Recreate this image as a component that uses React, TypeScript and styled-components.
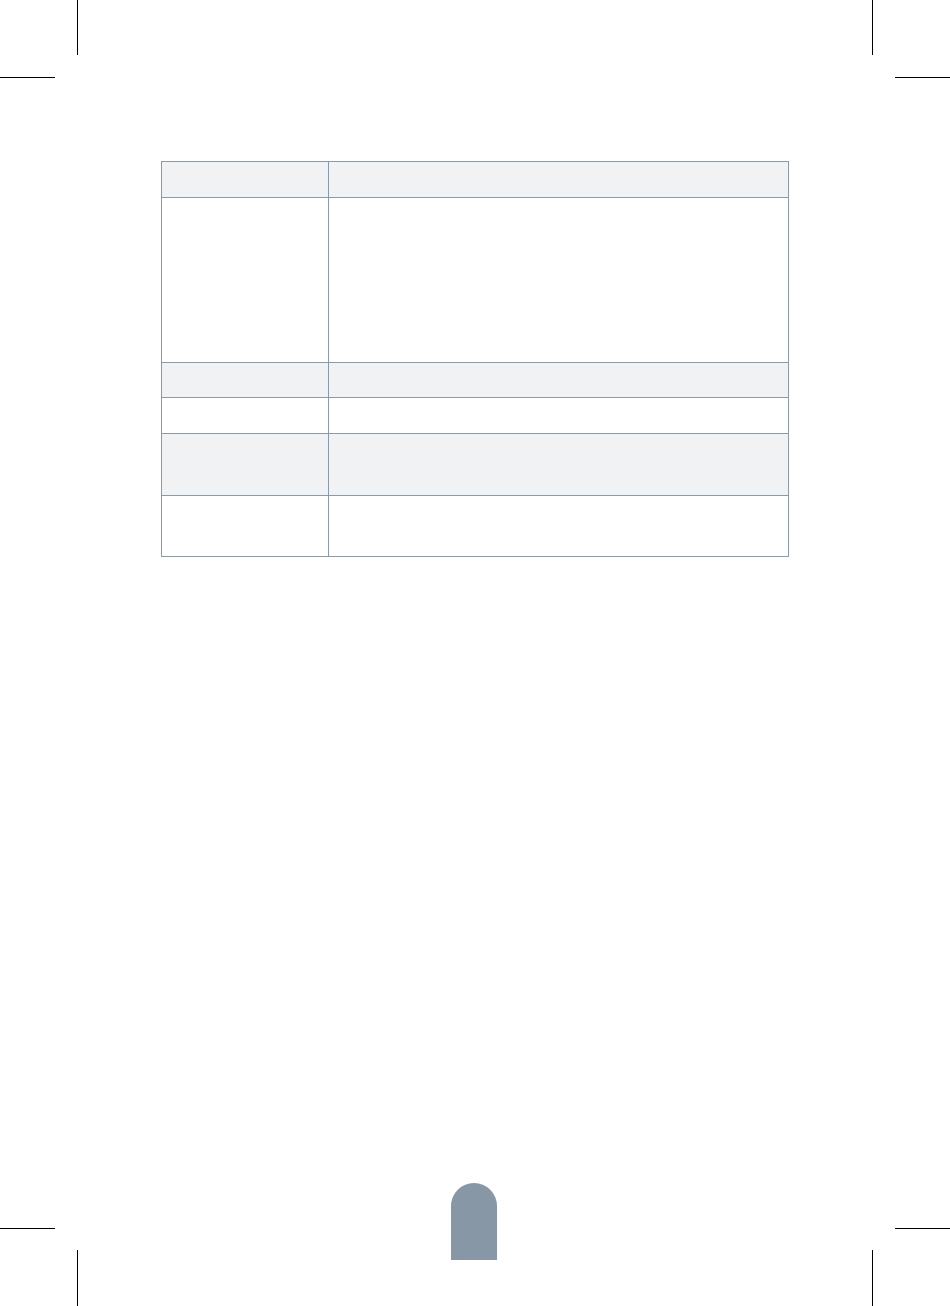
import React from "react";
import styled, { createGlobalStyle } from "styled-components";

const GlobalStyle = createGlobalStyle`
  html, body { margin: 0; padding: 0; background: #ffffff; }
  body { font-family: "Liberation Sans", Arial, sans-serif; }
`;

const Page = styled.div`
  position: relative;
  width: 950px;
  height: 1306px;
  box-sizing: border-box;
  padding: 161px 0 46px 161px;
  display: flex;
  flex-direction: column;
  align-items: flex-start;
  overflow: hidden;
  background: #ffffff;
`;

const CropMarks = styled.svg`
  position: absolute;
  inset: 0;
  width: 950px;
  height: 1306px;
  pointer-events: none;
`;

const Table = styled.div`
  display: grid;
  grid-template-columns: 167px 460px;
  border-left: 1px solid #8a9aa8;
  border-top: 1px solid #8a9aa8;
`;

const Cell = styled.div<{ $h: number; $shade: boolean }>`
  box-sizing: border-box;
  height: ${(p) => p.$h}px;
  border-right: 1px solid #8a9aa8;
  border-bottom: 1px solid #8a9aa8;
  background: ${(p) => (p.$shade ? "#f0f2f4" : "#ffffff")};
`;

const PageTab = styled.div`
  margin-top: auto;
  margin-left: 290px;
  width: 46px;
  height: 77px;
  border-radius: 23px 23px 0 0;
  background: #8797a5;
`;

const rows = [
  { h: 36, shade: true },
  { h: 165, shade: false },
  { h: 35, shade: true },
  { h: 36, shade: false },
  { h: 62, shade: true },
  { h: 61, shade: false },
];

export default function App() {
  return (
    <>
      <GlobalStyle />
      <Page>
        <CropMarks viewBox="0 0 950 1306" aria-hidden="true">
          <g stroke="#000" strokeWidth="1" shapeRendering="crispEdges">
            <line x1="77.5" y1="0" x2="77.5" y2="55" />
            <line x1="0" y1="77.5" x2="55" y2="77.5" />
            <line x1="872.5" y1="0" x2="872.5" y2="55" />
            <line x1="895" y1="77.5" x2="950" y2="77.5" />
            <line x1="0" y1="1228.5" x2="55" y2="1228.5" />
            <line x1="77.5" y1="1250" x2="77.5" y2="1306" />
            <line x1="895" y1="1228.5" x2="950" y2="1228.5" />
            <line x1="872.5" y1="1250" x2="872.5" y2="1306" />
          </g>
        </CropMarks>
        <Table>
          {rows.map((r, i) => (
            <React.Fragment key={i}>
              <Cell $h={r.h} $shade={r.shade} />
              <Cell $h={r.h} $shade={r.shade} />
            </React.Fragment>
          ))}
        </Table>
        <PageTab />
      </Page>
    </>
  );
}
